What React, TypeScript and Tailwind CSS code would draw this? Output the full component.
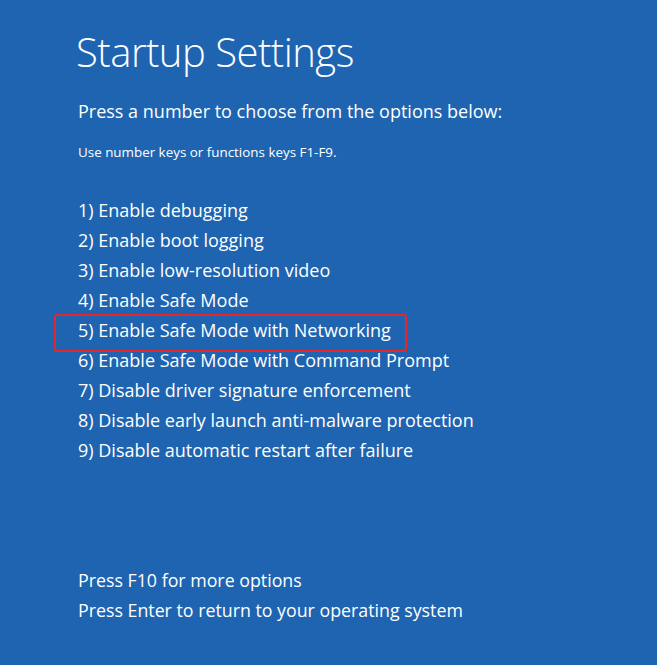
const options = [
  '1) Enable debugging',
  '2) Enable boot logging',
  '3) Enable low-resolution video',
  '4) Enable Safe Mode',
  '5) Enable Safe Mode with Networking',
  '6) Enable Safe Mode with Command Prompt',
  '7) Disable driver signature enforcement',
  '8) Disable early launch anti-malware protection',
  '9) Disable automatic restart after failure',
];

export default function App() {
  return (
    <div className="w-[657px] h-[665px] bg-[#1e64b0] text-white font-['Open_Sans',sans-serif] pl-[78px] pt-[26px] flex flex-col overflow-hidden">
      <h1 className="text-[40px] leading-[52px] font-light tracking-[-0.5px] -ml-[2px]">Startup Settings</h1>
      <p className="mt-[18px] text-[18px] leading-[30px]">Press a number to choose from the options below:</p>
      <p className="mt-[16px] text-[13.4px] leading-[20px]">Use number keys or functions keys F1-F9.</p>
      <ul className="mt-[33px] flex flex-col text-[18px] leading-[30px]">
        {options.map((o, i) => (
          <li key={o} className="relative">
            {o}
            {i === 4 && (
              <span className="absolute left-[-24px] top-[-1px] w-[353px] h-[38px] border-2 border-[#e8262a] rounded-[3px] pointer-events-none" />
            )}
          </li>
        ))}
      </ul>
      <div className="mt-[100px] flex flex-col text-[17.8px] leading-[30px]">
        <p>Press F10 for more options</p>
        <p>Press Enter to return to your operating system</p>
      </div>
    </div>
  );
}
